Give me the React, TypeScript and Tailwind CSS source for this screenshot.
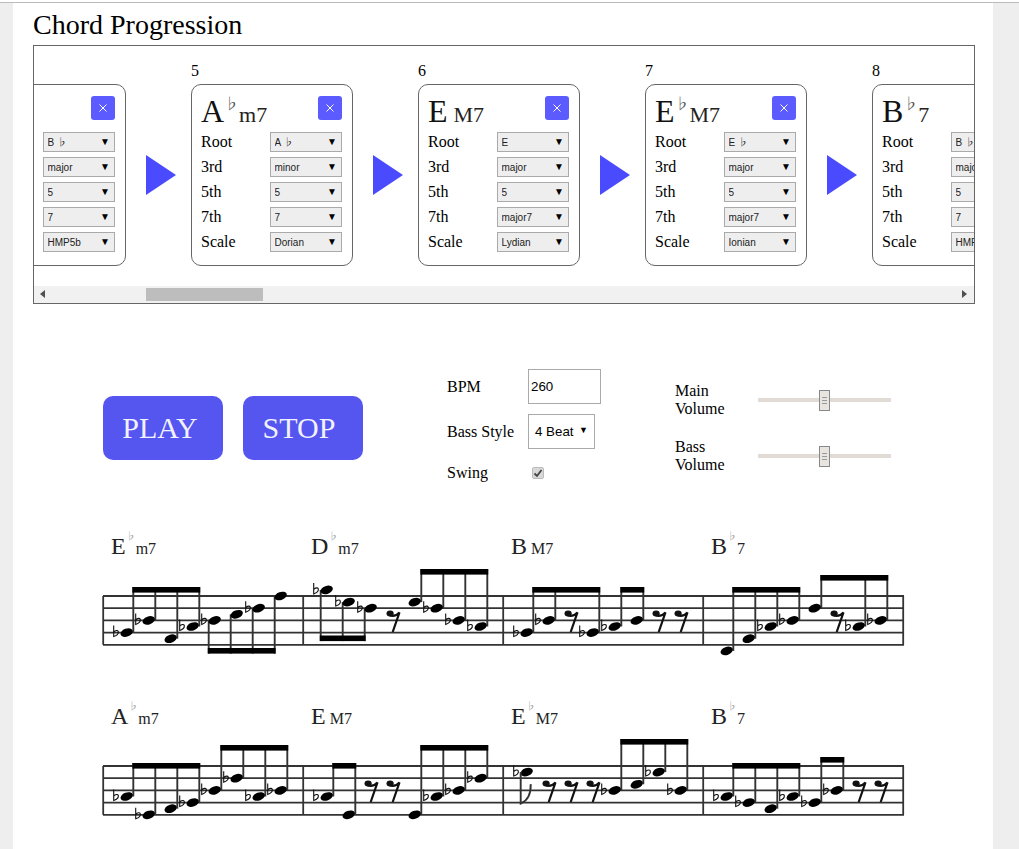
const serif = "font-['Liberation_Serif','DejaVu_Serif',serif]";
const sans = "font-['Liberation_Sans','DejaVu_Sans',sans-serif]";
const flatFont = "font-['Noto_Sans_CJK_JP',sans-serif]";

const cards = [
  { no: "4", root: "B", flat: true, suffix: "7", values: ["B ♭", "major", "5", "7", "HMP5b"] },
  { no: "5", root: "A", flat: true, suffix: "m7", values: ["A ♭", "minor", "5", "7", "Dorian"] },
  { no: "6", root: "E", flat: false, suffix: "M7", values: ["E", "major", "5", "major7", "Lydian"] },
  { no: "7", root: "E", flat: true, suffix: "M7", values: ["E ♭", "major", "5", "major7", "Ionian"] },
  { no: "8", root: "B", flat: true, suffix: "7", values: ["B ♭", "major", "5", "7", "HMP5b"] },
];

const labels = ["Root", "3rd", "5th", "7th", "Scale"];

type Beam = { from: number; to: number; y: number; down?: boolean };
type Measure = { notes: string; beams: Beam[] };
type Row = { chords: { root: string; flat: boolean; suffix: string }[]; measures: Measure[] };

// notes: staff step under the top line (half spaces), b = flat, f = flag, r = rest
const rows: Row[] = [
  {
    chords: [
      { root: "E", flat: true, suffix: "m7" },
      { root: "D", flat: true, suffix: "m7" },
      { root: "B", flat: false, suffix: "M7" },
      { root: "B", flat: true, suffix: "7" },
    ],
    measures: [
      { notes: "6b 4b 7 5b 4b 3 2b 0", beams: [{ from: 0, to: 3, y: -9 }, { from: 4, to: 7, y: 52, down: true }] },
      { notes: "-1b 1b 2b r 1 2b 4b 5b", beams: [{ from: 0, to: 2, y: 39.5, down: true }, { from: 4, to: 7, y: -27 }] },
      { notes: "6b 4b r 6b 5b 4 r r", beams: [{ from: 0, to: 3, y: -9 }, { from: 4, to: 5, y: -9 }] },
      { notes: "9 7 5b 4b 2 r 5b 4b", beams: [{ from: 0, to: 3, y: -9 }, { from: 4, to: 7, y: -21 }] },
    ],
  },
  {
    chords: [
      { root: "A", flat: true, suffix: "m7" },
      { root: "E", flat: false, suffix: "M7" },
      { root: "E", flat: true, suffix: "M7" },
      { root: "B", flat: true, suffix: "7" },
    ],
    measures: [
      { notes: "5b 8b 7 6b 4b 2b 5b 4b", beams: [{ from: 0, to: 3, y: -3 }, { from: 4, to: 7, y: -21 }] },
      { notes: "5b 8 r r 8 5b 4b 2b", beams: [{ from: 0, to: 1, y: -3 }, { from: 4, to: 7, y: -21 }] },
      { notes: "1bf r r r 4b 3 1b 4b", beams: [{ from: 4, to: 7, y: -27 }] },
      { notes: "5b 6b 7 5b 6b 4b r r", beams: [{ from: 0, to: 3, y: -3 }, { from: 4, to: 5, y: -9 }] },
    ],
  },
];

const INK = "#333";
const TOP = 36;
const STEP = 6.1;

function Staff({ measures }: { measures: Measure[] }) {
  return (
    <svg width="804" height="110" className="block -ml-px">
      {measures.map((m, mi) => {
        const tokens = m.notes.split(" ");
        const noteX = (i: number) => mi * 200 + 24.7 + 22 * i;
        const noteY = (t: string) => TOP + parseInt(t, 10) * STEP;
        return (
          <g key={mi}>
            {m.beams.map((b, bi) => {
              const off = b.down ? -6 : 6.6;
              const beamY = TOP + b.y;
              return (
                <g key={bi}>
                  {tokens.slice(b.from, b.to + 1).map((t, i) =>
                    t === "r" ? null : (
                      <line
                        key={i}
                        x1={noteX(b.from + i) + off}
                        x2={noteX(b.from + i) + off}
                        y1={noteY(t)}
                        y2={b.down ? beamY + 5.6 : beamY}
                        stroke={INK}
                        strokeWidth="1.9"
                      />
                    )
                  )}
                </g>
              );
            })}
          </g>
        );
      })}
      {[0, 1, 2, 3, 4].map((i) => (
        <line key={i} x1="1" x2="802" y1={TOP + i * 2 * STEP} y2={TOP + i * 2 * STEP} stroke={INK} strokeWidth="1.8" />
      ))}
      {[0, 1, 2, 3, 4].map((i) => (
        <line key={i} x1={1.2 + i * 200} x2={1.2 + i * 200} y1={TOP} y2={TOP + 8 * STEP} stroke={INK} strokeWidth="1.8" />
      ))}
      {measures.map((m, mi) => {
        const tokens = m.notes.split(" ");
        const noteX = (i: number) => mi * 200 + 24.7 + 22 * i;
        const noteY = (t: string) => TOP + parseInt(t, 10) * STEP;
        return (
          <g key={mi}>
            {m.beams.map((b, bi) => {
              const off = b.down ? -6 : 6.6;
              const x1 = noteX(b.from) + off - 0.9;
              const x2 = noteX(b.to) + off + 0.9;
              return <rect key={bi} x={x1} y={TOP + b.y} width={x2 - x1} height="5.6" fill="#000" />;
            })}
            {tokens.map((t, i) => {
              const x = noteX(i);
              if (t === "r") {
                return (
                  <g key={i}>
                    <ellipse cx={x - 2.6} cy={TOP + 17.6} rx="3.6" ry="3" fill="#111" />
                    <path d={`M${x - 3} ${TOP + 19.5} Q${x + 3} ${TOP + 21} ${x + 6.8} ${TOP + 16.4} L${x} ${TOP + 36}`} fill="none" stroke="#111" strokeWidth="2.2" />
                  </g>
                );
              }
              const y = noteY(t);
              return (
                <g key={i}>
                  <ellipse cx={x} cy={y} rx="6.4" ry="4" transform={`rotate(-20 ${x} ${y})`} fill="#000" />
                  {t.includes("b") && (
                    <path
                      d={`M${x - 13} ${y - 7} V${y + 4} C${x - 10} ${y + 3} ${x - 8} ${y + 1} ${x - 8.4} ${y - 1} C${x - 8.8} ${y - 2.6} ${x - 11.4} ${y - 2.4} ${x - 13} ${y - 0.4}`}
                      fill="none"
                      stroke="#111"
                      strokeWidth="1.1"
                    />
                  )}
                  {t.includes("f") && (
                    <path
                      d={`M${x - 6} ${y} V${y + 31.5} Q${x + 4.5} ${y + 27} ${x + 4} ${y + 12}`}
                      fill="none"
                      stroke={INK}
                      strokeWidth="1.9"
                    />
                  )}
                </g>
              );
            })}
          </g>
        );
      })}
    </svg>
  );
}

function CardSelect({ value }: { value: string }) {
  return (
    <div className="relative w-[72px] h-5">
      <select
        defaultValue={value}
        className={`font-['Liberation_Sans','Noto_Sans_CJK_JP',sans-serif] appearance-none block w-full h-full pl-[3.5px] border border-[#aaa] bg-[#eee] text-[10px] text-[#222] rounded-none outline-none`}
      >
        <option>{value}</option>
      </select>
      <span className={`${sans} absolute right-[5px] top-[4px] text-[10px] leading-[12px] text-black pointer-events-none`}>▼</span>
    </div>
  );
}

function ChordCard({ card }: { card: (typeof cards)[number] }) {
  return (
    <div className="w-[162px] shrink-0">
      <div className="h-6 text-base leading-[22px] text-black">{card.no}</div>
      <div className="h-[182px] border border-[#666] rounded-[10px] pl-[9px] pr-[10px] pt-[11px]">
        <div className="flex justify-between h-9">
          <div className="flex items-baseline h-9 leading-[30px] text-[#111] whitespace-nowrap">
            <span className="text-[32px]">{card.root}</span>
            {card.flat ? (
              <span className={`${flatFont} w-[15px] text-[15px] text-[#555] self-start leading-[14px]`}>♭</span>
            ) : (
              <span className="w-[6px]" />
            )}
            <span className="text-[22px] text-[#222]">{card.suffix}</span>
          </div>
          <button className="w-6 h-6 shrink-0 rounded-[3px] bg-[#5b5bff] text-white flex items-center justify-center">
            <svg width="10" height="10" viewBox="0 0 10 10">
              <path d="M1.5 1.5 L8.5 8.5 M8.5 1.5 L1.5 8.5" stroke="#fff" strokeWidth="1" fill="none" />
            </svg>
          </button>
        </div>
        <div className="flex flex-col gap-[5px]">
          {labels.map((label, i) => (
            <div key={label} className="flex items-center justify-between h-5 text-base">
              <span>{label}</span>
              <CardSelect value={card.values[i]} />
            </div>
          ))}
        </div>
      </div>
    </div>
  );
}

function Arrow() {
  return (
    <div className="w-[65px] shrink-0 h-[182px] mt-6 pl-5 flex items-center">
      <svg width="30" height="40" viewBox="0 0 30 40">
        <polygon points="0,0 30,20 0,40" fill="#4a4aff" />
      </svg>
    </div>
  );
}

function Volume({ label }: { label: string }) {
  return (
    <div className="flex items-center h-9">
      <div className="w-[83px] pr-[13px] text-base leading-[18px]">{label} Volume</div>
      <div className="relative w-[133px] h-1 bg-[#e0dcd5]">
        <div className="absolute left-[61px] -top-2 w-[11px] h-[21px] border border-[#888] bg-[#e8e4df] flex flex-col items-center justify-center gap-[2px]">
          <span className="block w-[5px] h-px bg-[#999]" />
          <span className="block w-[5px] h-px bg-[#999]" />
          <span className="block w-[5px] h-px bg-[#999]" />
        </div>
      </div>
    </div>
  );
}

export default function App() {
  return (
    <div className={`min-h-screen bg-[#eee] ${serif} text-black`}>
      <div className="h-[2px] bg-white" />
      <div className="h-px bg-[#bbb]" />
      <div className="ml-[13px] w-[980px] bg-white px-5 pb-2">
        <h1 className="text-[28px] leading-[44px] h-[42px] font-normal">Chord Progression</h1>

        <div className="w-[942px] h-[259px] border border-[#666]">
          <div className="h-[240px] overflow-hidden pt-[14px]">
            <div className="flex -ml-[70px]">
              {cards.map((card, i) => (
                <div key={card.no} className="flex shrink-0">
                  <ChordCard card={card} />
                  {i < cards.length - 1 && <Arrow />}
                </div>
              ))}
            </div>
          </div>
          <div className="h-[17px] bg-[#f1f1f1] flex items-center relative">
            <svg width="5" height="8" viewBox="0 0 5 8" className="absolute left-[6px] top-[4px]">
              <polygon points="5,0 5,8 0,4" fill="#505050" />
            </svg>
            <div className="ml-[112px] w-[117px] h-[13px] bg-[#bdbdbd]" />
            <svg width="5" height="8" viewBox="0 0 5 8" className="absolute right-[7px] top-[4px]">
              <polygon points="0,0 0,8 5,4" fill="#505050" />
            </svg>
          </div>
        </div>

        <div className="flex items-start mt-[65px] ml-[70px]">
          <button className="mt-[27px] w-[120px] h-16 pr-[6px] pb-[2px] rounded-[10px] bg-[#5555f0] text-[30px] text-[#f2f2ff]">PLAY</button>
          <button className="mt-[27px] ml-5 w-[120px] h-16 pr-[8px] pb-[2px] rounded-[10px] bg-[#5555f0] text-[30px] text-[#f2f2ff]">STOP</button>

          <div className="ml-[84px] w-[228px] text-base">
            <div className="flex items-center h-[35px]">
              <span className="w-[81px]">BPM</span>
              <input
                defaultValue="260"
                className={`${sans} w-[73px] h-[35px] border border-[#aaa] px-[2px] text-[13.33px] outline-none`}
              />
            </div>
            <div className="flex items-center h-[35px] mt-[10px]">
              <span className="w-[81px]">Bass Style</span>
              <div className="relative w-[67px] h-[35px]">
                <select
                  defaultValue="4 Beat"
                  className={`${sans} appearance-none block w-full h-full pl-[6px] border border-[#aaa] bg-white text-[13.33px] rounded-none outline-none`}
                >
                  <option>4 Beat</option>
                </select>
                <span className={`${sans} absolute right-[7px] top-[10px] text-[9px] leading-[12px] pointer-events-none`}>▼</span>
              </div>
            </div>
            <div className="flex items-center h-6 mt-3">
              <span className="w-[85px]">Swing</span>
              <span className="w-3 h-3 rounded-[2px] border border-[#bbb] bg-[#d8d8d8] flex items-center justify-center">
                <svg width="10" height="10" viewBox="0 0 10 10">
                  <path d="M1.5 5.5 L4 8 L8.5 2" stroke="#444" strokeWidth="1.8" fill="none" />
                </svg>
              </span>
            </div>
          </div>

          <div className="mt-[13px] flex flex-col gap-5">
            <Volume label="Main" />
            <Volume label="Bass" />
          </div>
        </div>

        <div className="mt-[45px] ml-[70px]">
          {rows.map((row, ri) => (
            <div key={ri} className="mb-[30px]">
              <div className="grid grid-cols-[200px_200px_200px_200px] h-[30px]">
                {row.chords.map((c, i) => (
                  <div key={i} className="pl-2 flex items-baseline h-[30px] leading-[44px] whitespace-nowrap text-[#222]">
                    <span className="text-2xl">{c.root}</span>
                    {c.flat ? (
                      <span className={`${flatFont} w-[10px] text-[10px] text-[#999] self-start leading-[11px]`}>♭</span>
                    ) : (
                      <span className="w-1" />
                    )}
                    <span className="text-base">{c.suffix}</span>
                  </div>
                ))}
              </div>
              <Staff measures={row.measures} />
            </div>
          ))}
        </div>
      </div>
    </div>
  );
}
